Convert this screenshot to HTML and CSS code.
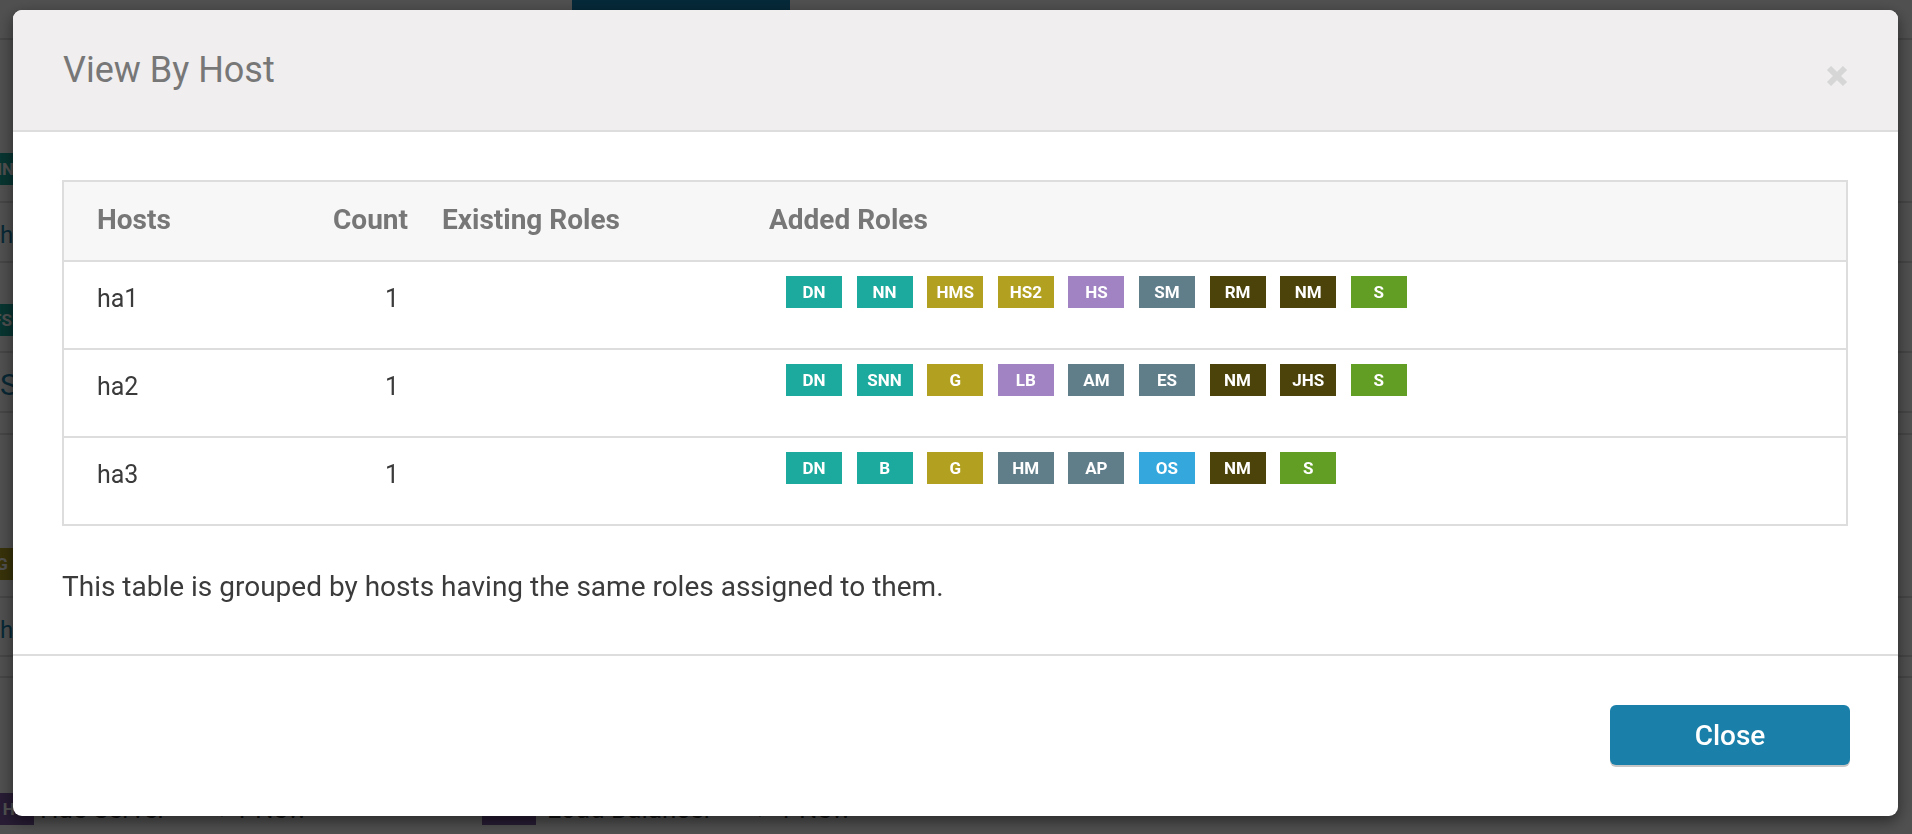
FILE: index.html
```html
<!DOCTYPE html>
<html>
<head>
<meta charset="utf-8">
<title>View By Host</title>
<link rel="stylesheet" href="styles.css">
</head>
<body>
<div class="page">
  <div class="topbar"><div class="topbar-tab"></div></div>
  <div class="bg-row bg-r1"><span class="bg-badge bg-teal">NN</span></div>
  <div class="bg-row bg-r2"><span class="bg-link">h</span></div>
  <div class="bg-row bg-r3"><span class="bg-badge bg-teal">FS</span></div>
  <div class="bg-row bg-r4"><span class="bg-link bg-big">S</span></div>
  <div class="bg-row bg-r5"></div>
  <div class="bg-row bg-r6"><span class="bg-badge bg-olive">G</span></div>
  <div class="bg-row bg-r7"><span class="bg-link">h</span></div>
  <div class="bg-row bg-r8"></div>
  <div class="bg-row bg-r9">
    <div class="bg-item bg-item1"><span class="bg-badge bg-purple">HS</span><span class="bg-text bg-name">Hue Server</span><span class="bg-text bg-arrow">→</span><span class="bg-text">1 New</span></div>
    <div class="bg-item bg-item2"><span class="bg-badge bg-purple">LB</span><span class="bg-text bg-name">Load Balancer</span><span class="bg-text bg-arrow">→</span><span class="bg-text">1 New</span></div>
  </div>
</div>
<div class="backdrop"></div>
<div class="modal">
  <div class="modal-header">
    <h4 class="modal-title">View By Host</h4>
    <button class="close" type="button" aria-label="Close">
      <svg width="22" height="22" viewBox="0 0 22 22"><path d="M3 3 L19 19 M19 3 L3 19" stroke="#d6d6d6" stroke-width="6" fill="none"/></svg>
    </button>
  </div>
  <div class="modal-body">
    <div class="tbl">
      <div class="tr th-row">
        <div class="c c-host">Hosts</div>
        <div class="c c-count">Count</div>
        <div class="c c-exist">Existing Roles</div>
        <div class="c c-added">Added Roles</div>
      </div>
      <div class="tr td-row">
        <div class="c c-host">ha1</div>
        <div class="c c-count">1</div>
        <div class="c c-exist"></div>
        <div class="c c-added">
          <span class="badge teal">DN</span><span class="badge teal">NN</span><span class="badge olive">HMS</span><span class="badge olive">HS2</span><span class="badge purple">HS</span><span class="badge slate">SM</span><span class="badge dark">RM</span><span class="badge dark">NM</span><span class="badge green">S</span>
        </div>
      </div>
      <div class="tr td-row">
        <div class="c c-host">ha2</div>
        <div class="c c-count">1</div>
        <div class="c c-exist"></div>
        <div class="c c-added">
          <span class="badge teal">DN</span><span class="badge teal">SNN</span><span class="badge olive">G</span><span class="badge purple">LB</span><span class="badge slate">AM</span><span class="badge slate">ES</span><span class="badge dark">NM</span><span class="badge dark">JHS</span><span class="badge green">S</span>
        </div>
      </div>
      <div class="tr td-row">
        <div class="c c-host">ha3</div>
        <div class="c c-count">1</div>
        <div class="c c-exist"></div>
        <div class="c c-added">
          <span class="badge teal">DN</span><span class="badge teal">B</span><span class="badge olive">G</span><span class="badge slate">HM</span><span class="badge slate">AP</span><span class="badge blue">OS</span><span class="badge dark">NM</span><span class="badge green">S</span>
        </div>
      </div>
    </div>
    <p class="note">This table is grouped by hosts having the same roles assigned to them.</p>
  </div>
  <div class="modal-footer">
    <button class="btn-primary" type="button">Close</button>
  </div>
</div>
</body>
</html>
```

FILE: styles.css
```css
* { box-sizing: border-box; }
html, body { margin: 0; padding: 0; }
body {
  width: 1912px;
  height: 834px;
  overflow: hidden;
  background: #fff;
  font-family: Roboto, "Noto Sans", "Liberation Sans", sans-serif;
}

/* ---------- background page ---------- */
.page { height: 834px; overflow: hidden; color: #333; }
.topbar { height: 40px; border-bottom: 2px solid #ddd; display: flex; }
.topbar-tab { margin-left: 572px; width: 218px; height: 38px; background: #1383b5; }
.bg-row { border-bottom: 2px solid #ddd; display: flex; align-items: flex-start; }
.bg-r1 { height: 163px; padding-top: 113px; }
.bg-r2 { height: 60px; padding-top: 15px; }
.bg-r3 { height: 90px; padding-top: 41px; }
.bg-r4 { height: 60px; padding-top: 12px; }
.bg-r5 { height: 22px; }
.bg-r6 { height: 163px; padding-top: 113px; }
.bg-r7 { height: 59px; padding-top: 15px; }
.bg-r8 { height: 21px; }
.bg-r9 { height: 200px; padding-top: 114px; border-bottom: none; }
.bg-badge {
  display: inline-block; flex: none; width: 40px; height: 32px; line-height: 32px;
  margin-left: -18px; color: #fff; font-weight: 700; font-size: 17px; text-align: center;
}
.bg-teal { background: #1aa99d; }
.bg-olive { background: #b2a01f; }
.bg-purple { background: #7d5aa6; }
.bg-link { color: #1a7fa8; font-size: 24px; line-height: 34px; }
.bg-big { font-size: 30px; line-height: 40px; }
.bg-item { display: flex; align-items: center; flex: none; }
.bg-item1 { width: 488px; margin-left: -6px; }
.bg-item1 .bg-badge { margin-left: 0; width: 40px; }
.bg-item1 .bg-name { margin-left: 6px; width: 165px; }
.bg-item1 .bg-arrow { width: 29px; }
.bg-item2 .bg-badge { margin-left: 0; width: 54px; }
.bg-item2 .bg-name { margin-left: 11px; width: 196px; }
.bg-item2 .bg-arrow { width: 35px; }
.bg-text { font-size: 26px; line-height: 34px; color: #333; white-space: nowrap; }

.backdrop { position: fixed; inset: 0; background: rgba(0, 0, 0, 0.685); }

/* ---------- modal ---------- */
.modal {
  position: fixed;
  top: 10px; left: 13px; right: 14px;
  height: 806px;
  background: #fff;
  border-radius: 9px;
  box-shadow: 0 5px 15px rgba(0, 0, 0, 0.5);
  display: flex;
  flex-direction: column;
  overflow: hidden;
}
.modal-header {
  height: 122px;
  flex: none;
  background: #f0eeef;
  border-bottom: 2px solid #ddd;
  display: flex;
  justify-content: space-between;
  align-items: flex-start;
  padding: 39px 50px 0 50px;
}
.modal-title {
  margin: 0;
  font-size: 36px;
  line-height: 42px;
  font-weight: 400;
  color: #777;
}
.close {
  margin-top: 16px;
  width: 22px; height: 22px;
  padding: 0; border: none; background: none;
  display: block;
}
.close svg { display: block; }

.modal-body { flex: 1; padding: 48px 50px 0 49px; }

.tbl { border: 2px solid #ddd; }
.tr {
  display: grid;
  grid-template-columns: 240px 104px 328px 1fr;
}
.tr + .tr { border-top: 2px solid #ddd; }
.th-row { height: 78px; background: #f7f7f7; font-size: 28px; line-height: 38px; font-weight: 700; color: #777; }
.th-row .c { padding-top: 19px; }
.td-row { height: 88px; font-size: 25px; line-height: 34px; color: #3b3b3b; }
.td-row .c { padding-top: 20px; }
.c-host { padding-left: 33px; }
.c-count { text-align: right; }
.td-row .c-count { padding-right: 9px; }
.c-exist { padding-left: 34px; }
.th-row .c-added { padding-left: 33px; }
.td-row .c-added {
  padding-left: 50px;
  display: flex;
  align-items: flex-start;
  gap: 14.6px;
}
.td-row .c.c-added { padding-top: 14px; }

.badge {
  display: block;
  width: 56px; height: 32px;
  line-height: 32px;
  text-align: center;
  color: #fff;
  font-size: 17px;
  font-weight: 700;
}
.teal { background: #1baa9d; }
.olive { background: #b2a020; }
.purple { background: #a183c3; }
.slate { background: #607d8a; }
.dark { background: #4c430a; }
.green { background: #629e24; }
.blue { background: #34a8dc; }

.note {
  margin: 41px 0 0;
  font-size: 28px;
  line-height: 40px;
  color: #3b3b3b;
}

.modal-footer {
  height: 162px;
  flex: none;
  border-top: 2px solid #ddd;
  padding: 49px 48px 0;
  display: flex;
  justify-content: flex-end;
  align-items: flex-start;
}
.btn-primary {
  width: 240px; height: 60px;
  background: #1a80aa;
  color: #fff;
  border: none;
  border-radius: 6px;
  box-shadow: 0 2px 0 #c6c6c6;
  font-family: Roboto, "Noto Sans", "Liberation Sans", sans-serif;
  font-size: 28px;
  font-weight: 500;
  padding: 0;
}
```
